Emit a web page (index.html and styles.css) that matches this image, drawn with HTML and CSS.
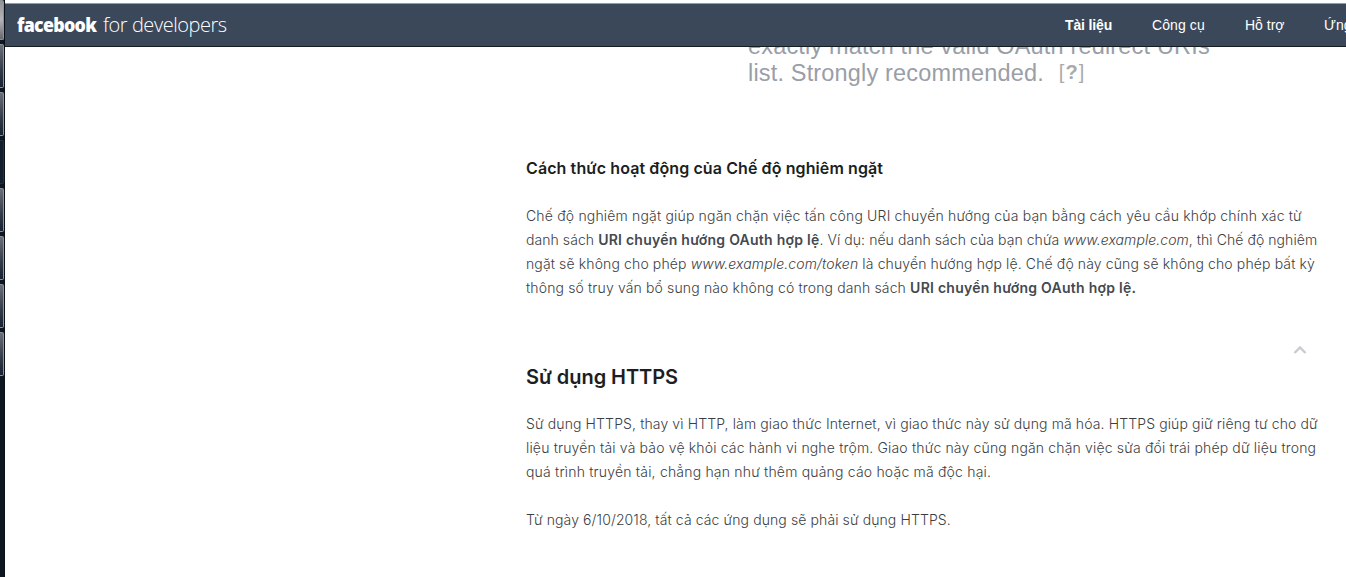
FILE: index.html
```html
<!DOCTYPE html>
<html lang="vi">
<head>
<meta charset="utf-8">
<title>facebook for developers</title>
<link rel="stylesheet" href="styles.css">
</head>
<body>
<div class="screen">
  <aside class="taskbar">
    <div class="task task-first"></div>
    <div class="task"></div>
    <div class="task"></div>
    <div class="task task-dark"></div>
    <div class="task"></div>
    <div class="task"></div>
    <div class="task"></div>
    <div class="task"></div>
  </aside>
  <div class="page">
    <header class="topbar">
      <div class="logo"><b class="brand">facebook</b><span class="product">for developers</span></div>
      <nav class="nav">
        <a class="nav-item current">Tài liệu</a>
        <a class="nav-item tools">Công cụ</a>
        <a class="nav-item support">Hỗ trợ</a>
        <a class="nav-item">Ứng</a>
      </nav>
    </header>
    <main class="content">
      <div class="figure">
        <div class="figure-line"><span>exactly match the valid OAuth redirect URIs</span></div>
        <div class="figure-line"><span>list. Strongly recommended.</span><span class="help">[<b>?</b>]</span></div>
      </div>
      <h4 class="subtitle">Cách thức hoạt động của Chế độ nghiêm ngặt</h4>
      <p class="text first">
        <span class="line a1">Chế độ nghiêm ngặt giúp ngăn chặn việc tấn công URI chuyển hướng của bạn bằng cách yêu cầu khớp chính xác từ</span>
        <span class="line a2">danh sách <b>URI chuyển hướng OAuth hợp lệ</b>. Ví dụ: nếu danh sách của bạn chứa <i>www.example.com</i>, thì Chế độ nghiêm</span>
        <span class="line a3">ngặt sẽ không cho phép <i>www.example.com/token</i> là chuyển hướng hợp lệ. Chế độ này cũng sẽ không cho phép bất kỳ</span>
        <span class="line a4">thông số truy vấn bổ sung nào không có trong danh sách <b>URI chuyển hướng OAuth hợp lệ.</b></span>
      </p>
      <div class="to-top">
        <svg width="14" height="10" viewBox="0 0 14 10"><path d="M1.5 8 L7 2.5 L12.5 8" fill="none" stroke="#c9cbd0" stroke-width="2.4"/></svg>
      </div>
      <h2 class="title">Sử dụng HTTPS</h2>
      <p class="text second">
        <span class="line b1">Sử dụng HTTPS, thay vì HTTP, làm giao thức Internet, vì giao thức này sử dụng mã hóa. HTTPS giúp giữ riêng tư cho dữ</span>
        <span class="line b2">liệu truyền tải và bảo vệ khỏi các hành vi nghe trộm. Giao thức này cũng ngăn chặn việc sửa đổi trái phép dữ liệu trong</span>
        <span class="line b3">quá trình truyền tải, chẳng hạn như thêm quảng cáo hoặc mã độc hại.</span>
      </p>
      <p class="text third"><span class="line c1">Từ ngày 6/10/2018, tất cả các ứng dụng sẽ phải sử dụng HTTPS.</span></p>
    </main>
  </div>
</div>
</body>
</html>
```

FILE: styles.css
```css
* { box-sizing: border-box; }
body { margin: 0; background: #fff; overflow: hidden; }
.screen { display: flex; width: 1346px; height: 577px; overflow: hidden; }

.taskbar { width: 5px; flex: none; background: #0e1720; border-right: 1px solid #080f18; display: flex; flex-direction: column; gap: 4px; }
.task { height: 44px; flex: none; border: 1px solid #8b929b; border-left: 0; border-radius: 0 2px 2px 0; background: linear-gradient(#6b6f78, #333b47 60%, #172230); }
.task-first { height: 40px; background: linear-gradient(#8e8e94, #b5b5b9 50%, #66666d); border-top: 0; }
.task-dark { background: #121e2b; border-color: #26333f; }

.page { width: 1341px; flex: none; padding-top: 3px; }
.topbar { height: 44px; border-top: 1px solid #989a9d; border-bottom: 1px solid #171c23; background: #3b4859; color: #fff; display: flex; justify-content: space-between; overflow: hidden; position: relative; z-index: 1; }
.logo { font-family: "Open Sans", sans-serif; font-size: 20px; line-height: 41px; padding-left: 12px; white-space: nowrap; display: flex; }
.brand { width: 86px; letter-spacing: -0.8px; font-weight: 800; transform: scaleX(0.89); transform-origin: 0 50%; }
.product { font-weight: 300; letter-spacing: -0.45px; color: #fff; }
.nav { width: 281px; display: flex; font: 14px/43px "Liberation Sans", Arial, sans-serif; white-space: nowrap; }
.nav-item { width: 87px; flex: none; }
.current { font-weight: bold; letter-spacing: -0.15px; }
.tools { width: 93px; letter-spacing: 0.1px; }
.support { width: 79px; }

.content { padding-left: 521px; }
.figure { height: 91px; margin-left: 222px; margin-top: -14px; font: 23.5px/27px "Liberation Sans", Arial, sans-serif; letter-spacing: 0.17px; color: #9a9ea7; }
.figure-line { white-space: nowrap; display: flex; }
.help { margin-left: 15px; font-size: 20px; line-height: 25px; letter-spacing: 1px; color: #aaa; }
.subtitle { margin: 32px 0 0; font: 600 16px/24px Inter, sans-serif; letter-spacing: 0.1px; color: #1c1e21; white-space: nowrap; }
.text { margin: 0; font: 300 14px/24px Inter, sans-serif; color: #3b3e43; }
.text b { font-weight: 600; letter-spacing: 0.25px; color: #444950; }
.line { display: table; white-space: nowrap; }
.a1 { letter-spacing: 0.176px; }
.a2 { letter-spacing: 0.065px; }
.a3 { letter-spacing: 0.125px; }
.a4 { letter-spacing: 0.14px; }
.b1 { letter-spacing: 0.12px; }
.b2 { letter-spacing: 0.16px; }
.b3 { letter-spacing: 0.19px; }
.c1 { letter-spacing: 0.1px; }
.first { margin-top: 24px; }
.to-top { height: 10px; margin: 45px 0 0 767px; line-height: 0; }
.title { margin: 6px 0 0; font: 600 20px/32px Inter, sans-serif; letter-spacing: -0.05px; color: #1c1e21; white-space: nowrap; }
.second { margin-top: 19px; }
.third { margin-top: 24px; }
```
